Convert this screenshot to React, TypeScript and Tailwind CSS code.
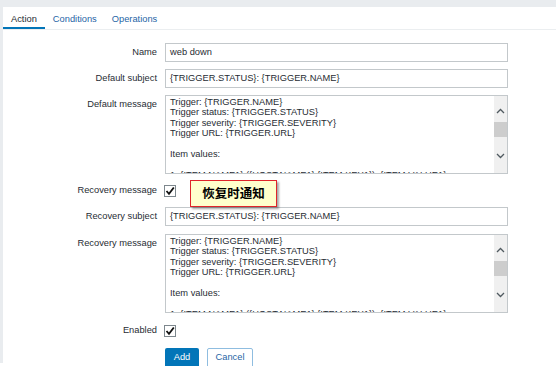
const font = { fontFamily: '"Liberation Sans", Arial, sans-serif' };

const messageLines = [
  "Trigger: {TRIGGER.NAME}",
  "Trigger status: {TRIGGER.STATUS}",
  "Trigger severity: {TRIGGER.SEVERITY}",
  "Trigger URL: {TRIGGER.URL}",
  "",
  "Item values:",
  "",
  "1. {ITEM.NAME1} ({HOST.NAME1}:{ITEM.KEY1}): {ITEM.VALUE1}",
];

// ─── Pieces ──────────────────────────────────────────

function Chevron({ up }: { up?: boolean }) {
  return (
    <svg width="9" height="6" viewBox="0 0 9 6" className="block">
      <path
        d={up ? "M1 5 L4.5 1.5 L8 5" : "M1 1 L4.5 4.5 L8 1"}
        fill="none"
        stroke="#505a60"
        strokeWidth="1.3"
      />
    </svg>
  );
}

function Checkbox() {
  return (
    <div className="w-[12px] h-[12px] border border-[#7d878d] bg-white flex items-center justify-center">
      <svg width="10" height="10" viewBox="0 0 10 10">
        <path d="M1.5 5 L4 7.8 L8.8 1.5" fill="none" stroke="#111" strokeWidth="1.8" />
      </svg>
    </div>
  );
}

function Label({ children, className = "" }: { children: React.ReactNode; className?: string }) {
  return (
    <div className={`w-[154px] shrink-0 text-right text-[#1f2c33] ${className}`}>{children}</div>
  );
}

function TextInput({ value }: { value: string }) {
  return (
    <div className="w-[343px] h-[19px] border border-[#c3c8cb] bg-white px-[4px] flex items-center text-[#1f2c33] whitespace-nowrap overflow-hidden">
      {value}
    </div>
  );
}

function TextArea() {
  return (
    <div className="w-[343px] h-[79px] border border-[#c3c8cb] bg-white flex">
      <div className="flex-1 overflow-hidden pl-[4px] pt-[1px] leading-[10.4px] text-[#1f2c33] whitespace-nowrap">
        {messageLines.map((l, i) => (
          <div key={i} className="h-[10.4px]">
            {l}
          </div>
        ))}
      </div>
      <div className="w-[13px] bg-[#f0f0f0] flex flex-col items-center">
        <div className="mt-[12px]">
          <Chevron up />
        </div>
        <div className="w-full h-[15px] bg-[#cdcdcd] mt-[8px]" />
        <div className="flex-1" />
        <div className="mb-[14px]">
          <Chevron />
        </div>
      </div>
    </div>
  );
}

// ─── Component ───────────────────────────────────────

export default function App() {
  return (
    <div className="w-[558px] h-[366px] overflow-hidden bg-white text-[9.3px]" style={font}>
      <div className="h-[7px] w-[556px] bg-[#e9ecef]" />
      <div className="flex">
        <div className="w-[3px] h-[356px] bg-[#e9ecef]" />
        <div className="flex-1 relative">
          {/* Tabs */}
          <div className="flex h-[23px] border-b border-[#ebeef0] w-[553px]">
            <div className="px-[8px] pt-[6px] text-[#1f2c33] border-b-2 border-[#0275b8]">Action</div>
            <div className="px-[8px] pt-[6px] text-[#1f65a6]">Conditions</div>
            <div className="px-[7px] pt-[6px] text-[#1f65a6]">Operations</div>
          </div>

          <div className="pt-[13px] flex flex-col">
            <div className="flex items-center gap-[8px]">
              <Label>Name</Label>
              <TextInput value="web down" />
            </div>
            <div className="flex items-center gap-[8px] mt-[7px]">
              <Label>Default subject</Label>
              <TextInput value="{TRIGGER.STATUS}: {TRIGGER.NAME}" />
            </div>
            <div className="flex items-start gap-[8px] mt-[7px]">
              <Label className="pt-[3px]">Default message</Label>
              <TextArea />
            </div>
            <div className="flex items-center gap-[7px] mt-[10px] h-[14px]">
              <Label>Recovery message</Label>
              <Checkbox />
            </div>
            <div className="flex items-center gap-[8px] mt-[9px]">
              <Label>Recovery subject</Label>
              <TextInput value="{TRIGGER.STATUS}: {TRIGGER.NAME}" />
            </div>
            <div className="flex items-start gap-[8px] mt-[8px]">
              <Label className="pt-[3px]">Recovery message</Label>
              <TextArea />
            </div>
            <div className="flex items-center gap-[7px] mt-[11px] h-[14px]">
              <Label>Enabled</Label>
              <Checkbox />
            </div>
            <div className="flex gap-[8px] mt-[10px] pl-[162px]">
              <button className="w-[34px] h-[20px] bg-[#0275b8] text-white rounded-[2px]">Add</button>
              <button className="w-[46px] h-[20px] border border-[#8fbde0] text-[#1f65a6] bg-white rounded-[2px]">
                Cancel
              </button>
            </div>
          </div>

          {/* Annotation */}
          <div
            className="absolute left-[187px] top-[173px] w-[87px] h-[27px] bg-[#ffffcc] border-[1.5px] border-[#e0242a] shadow-[2px_2px_2px_rgba(0,0,0,0.35)] flex items-center justify-center text-[12.5px] font-bold text-black"
            style={{ fontFamily: '"Noto Sans CJK SC", sans-serif' }}
          >
            恢复时通知
          </div>
        </div>
      </div>
    </div>
  );
}
